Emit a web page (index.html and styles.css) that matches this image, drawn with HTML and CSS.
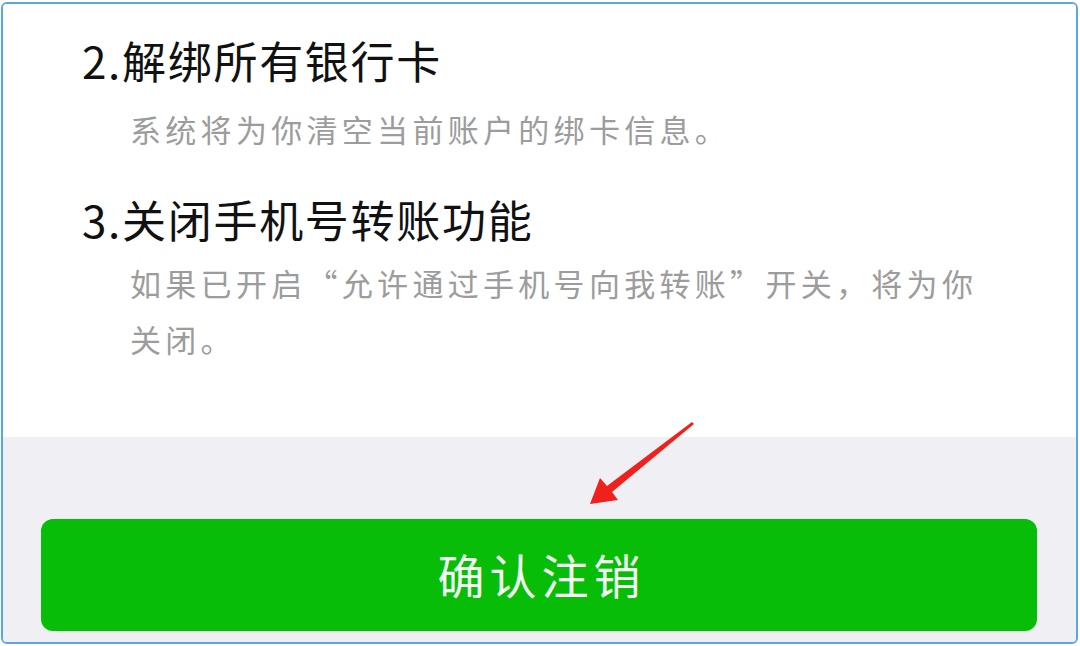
FILE: index.html
```html
<!DOCTYPE html>
<html lang="zh-CN">
<head>
<meta charset="utf-8">
<link rel="stylesheet" href="styles.css">
</head>
<body>
<div class="frame">
  <div class="content">
    <div class="item">
      <div class="title">2.解绑所有银行卡</div>
      <div class="desc first">系统将为你清空当前账户的绑卡信息。</div>
    </div>
    <div class="item second">
      <div class="title">3.关闭手机号转账功能</div>
      <div class="desc">如果已开启“允许通过手机号向我转账”开关，将为你关闭。</div>
    </div>
  </div>
  <div class="footer">
    <button class="confirm">确认注销</button>
  </div>
  <svg class="arrow" width="120" height="100" viewBox="0 0 120 100">
    <polygon fill="#f0201c" points="112,8 114,10 32,78 38,86 10,90 20,64 27,72"/>
  </svg>
</div>
</body>
</html>
```
FILE: styles.css
```css
html, body {
  margin: 0;
  padding: 0;
  background: #ffffff;
}
body {
  font-family: "Noto Sans CJK SC", "Noto Sans", sans-serif;
  width: 1080px;
  height: 646px;
  overflow: hidden;
}
.frame {
  position: relative;
  box-sizing: border-box;
  margin: 2px 0 0 1px;
  width: 1077px;
  height: 642px;
  border: 2px solid #5aa6e2;
  border-radius: 6px;
  overflow: hidden;
  display: flex;
  flex-direction: column;
}
.content {
  background: #ffffff;
  height: 433px;
  padding: 26px 0 0 79px;
  box-sizing: border-box;
}
.title {
  font-size: 44px;
  line-height: 60px;
  color: #111111;
  letter-spacing: 1.7px;
}
.desc {
  font-size: 31px;
  line-height: 56px;
  color: #9c9c9c;
  letter-spacing: 4.3px;
  padding-left: 48px;
  width: 860px;
  margin-top: 6px;
}
.desc.first {
  margin-top: 11px;
}
.item.second {
  margin-top: 32px;
}
.footer {
  flex: 1;
  background: #efeff4;
  padding: 82px 0 0 38px;
  box-sizing: border-box;
}
.confirm {
  display: flex;
  align-items: center;
  justify-content: center;
  width: 996px;
  height: 112px;
  border: none;
  border-radius: 12px;
  background: #08bd08;
  color: #f4fff4;
  font-family: "Noto Sans CJK SC", "Noto Sans", sans-serif;
  font-size: 47px;
  letter-spacing: 5px;
  padding: 0 0 4px 5px;
}
.arrow {
  position: absolute;
  left: 577px;
  top: 410px;
}
```
